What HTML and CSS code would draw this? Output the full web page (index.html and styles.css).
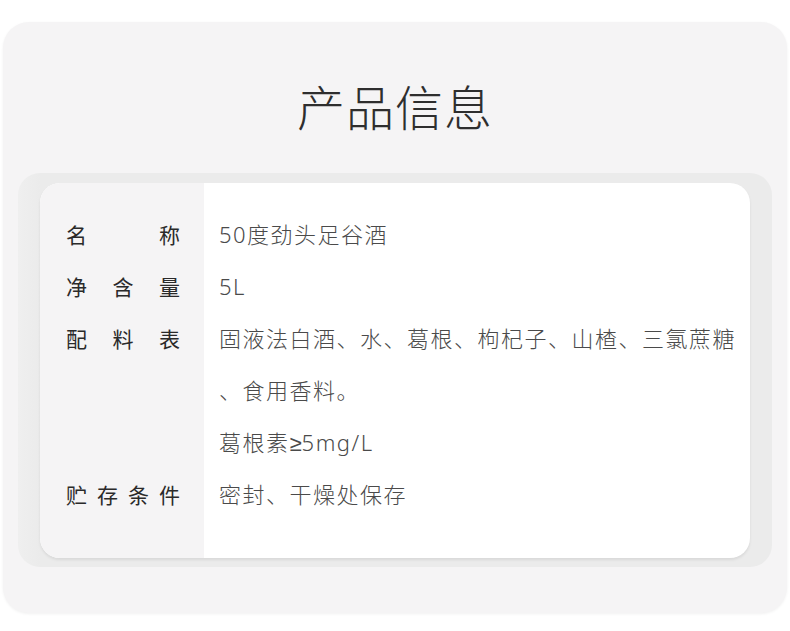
FILE: index.html
```html
<!DOCTYPE html>
<html lang="zh-CN">
<head>
<meta charset="utf-8">
<title>产品信息</title>
<link rel="stylesheet" href="styles.css">
</head>
<body>
<div class="panel">
  <h1 class="title">产品信息</h1>
  <div class="frame">
    <div class="card">
      <div class="labels">
        <div class="label">名称</div>
        <div class="label">净含量</div>
        <div class="label">配料表</div>
        <div class="label blank"></div>
        <div class="label blank"></div>
        <div class="label">贮存条件</div>
      </div>
      <div class="values">
        <div class="value">50度劲头足谷酒</div>
        <div class="value">5L</div>
        <div class="value">固液法白酒、水、葛根、枸杞子、山楂、三氯蔗糖</div>
        <div class="value">、食用香料。</div>
        <div class="value">葛根素<span class="sym">≥</span>5mg/L</div>
        <div class="value">密封、干燥处保存</div>
      </div>
    </div>
  </div>
</div>
</body>
</html>
```

FILE: styles.css
```css
* { box-sizing: border-box; }
html, body { margin: 0; padding: 0; background: #ffffff; }
body {
  width: 790px;
  height: 631px;
  padding: 22px 3px 18px 3px;
  font-family: "Noto Sans CJK SC", "Noto Sans", sans-serif;
}
.panel {
  width: 784px;
  height: 591px;
  background: #f5f4f5;
  border-radius: 26px;
  box-shadow: 0 1px 3px rgba(0,0,0,0.06);
  padding: 59px 15px 0 15px;
}
.title {
  margin: 0 0 44px 0;
  text-align: center;
  font-size: 48px;
  line-height: 48px;
  font-weight: 300;
  color: #2e2e2e;
  letter-spacing: 1px;
}
.frame {
  width: 754px;
  height: 394px;
  background: linear-gradient(90deg, #efefef 0px, #ebebeb 22px, #ebebeb 100%);
  border-radius: 22px;
  padding: 10px 22px 9px 22px;
}
.card {
  display: flex;
  width: 710px;
  height: 375px;
  background: #ffffff;
  border-radius: 20px;
  overflow: hidden;
  box-shadow: 0 2px 3px rgba(0,0,0,0.08);
}
.labels {
  width: 164px;
  background: #f5f4f5;
  padding: 25px 24px 0 26px;
}
.label {
  width: 114px;
  height: 52px;
  line-height: 52px;
  font-size: 21px;
  color: #2a2a2a;
  text-align: justify;
  text-align-last: justify;
}
.values {
  flex: 1;
  padding: 25px 0 0 15px;
}
.value {
  height: 52px;
  line-height: 52px;
  font-family: "Noto Sans", "Noto Sans CJK SC", sans-serif;
  font-size: 22px;
  font-weight: 300;
  color: #4a4a4a;
  letter-spacing: 1.5px;
  white-space: nowrap;
}
.sym {
  font-family: "Liberation Sans", sans-serif;
  font-weight: 400;
  letter-spacing: 0;
}
```
